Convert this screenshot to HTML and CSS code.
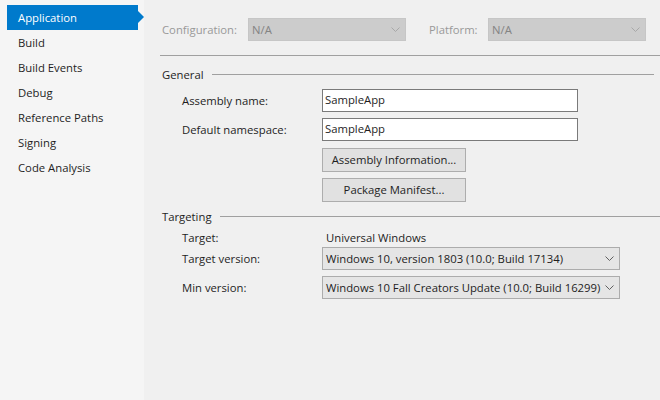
FILE: index.html
```html
<!DOCTYPE html>
<html>
<head>
<meta charset="utf-8">
<link rel="stylesheet" href="styles.css">
</head>
<body>
<div class="app">
  <nav class="sidebar">
    <div class="nav-item active">Application</div>
    <div class="nav-item">Build</div>
    <div class="nav-item">Build Events</div>
    <div class="nav-item">Debug</div>
    <div class="nav-item">Reference Paths</div>
    <div class="nav-item">Signing</div>
    <div class="nav-item">Code Analysis</div>
  </nav>
  <main class="main">
    <div class="topbar">
      <span class="top-label">Configuration:</span>
      <div class="combo disabled"><span>N/A</span><svg class="chev" width="9" height="5" viewBox="0 0 9 5"><path d="M0.5 0.5 L4.5 4.5 L8.5 0.5" fill="none" stroke="#a8a8a8" stroke-width="1"/></svg></div>
      <span class="top-label platform">Platform:</span>
      <div class="combo disabled"><span>N/A</span><svg class="chev" width="9" height="5" viewBox="0 0 9 5"><path d="M0.5 0.5 L4.5 4.5 L8.5 0.5" fill="none" stroke="#a8a8a8" stroke-width="1"/></svg></div>
    </div>
    <div class="rule"></div>

    <div class="group-title general"><span>General</span><div class="group-line"></div></div>
    <div class="row r-asm">
      <span class="label">Assembly name:</span>
      <div class="textbox">SampleApp</div>
    </div>
    <div class="row r-ns">
      <span class="label">Default namespace:</span>
      <div class="textbox">SampleApp</div>
    </div>
    <div class="row r-btn1">
      <span class="label"></span>
      <div class="button">Assembly Information...</div>
    </div>
    <div class="row r-btn2">
      <span class="label"></span>
      <div class="button">Package Manifest...</div>
    </div>

    <div class="group-title targeting"><span>Targeting</span><div class="group-line"></div></div>
    <div class="row r-target">
      <span class="label">Target:</span>
      <span class="value">Universal Windows</span>
    </div>
    <div class="row r-tv">
      <span class="label">Target version:</span>
      <div class="combo wide"><span>Windows 10, version 1803 (10.0; Build 17134)</span><svg class="chev" width="9" height="5" viewBox="0 0 9 5"><path d="M0.5 0.5 L4.5 4.5 L8.5 0.5" fill="none" stroke="#606060" stroke-width="1"/></svg></div>
    </div>
    <div class="row r-mv">
      <span class="label">Min version:</span>
      <div class="combo wide"><span>Windows 10 Fall Creators Update (10.0; Build 16299)</span><svg class="chev" width="9" height="5" viewBox="0 0 9 5"><path d="M0.5 0.5 L4.5 4.5 L8.5 0.5" fill="none" stroke="#606060" stroke-width="1"/></svg></div>
    </div>
  </main>
</div>
</body>
</html>
```

FILE: styles.css
```css
html, body {
  margin: 0;
  padding: 0;
  background: #f0f0f0;
}
body {
  font-family: "Open Sans", "Noto Sans", "Liberation Sans", sans-serif;
  font-size: 11.3px;
  color: #1e1e1e;
}
.app {
  display: flex;
  width: 660px;
  height: 400px;
  overflow: hidden;
}
.sidebar {
  width: 144px;
  flex: none;
  background: #f5f5f5;
  padding-top: 5px;
  box-sizing: border-box;
}
.nav-item {
  height: 25px;
  line-height: 25px;
  padding-left: 18px;
  box-sizing: border-box;
}
.nav-item.active {
  position: relative;
  margin-left: 7px;
  width: 131px;
  padding-left: 11px;
  background: #007acc;
  color: #ffffff;
}
.nav-item.active::after {
  content: "";
  position: absolute;
  left: 131px;
  top: 6px;
  border-top: 6px solid transparent;
  border-bottom: 6px solid transparent;
  border-left: 6px solid #007acc;
}
.main {
  flex: 1;
  padding-left: 16px;
  display: flex;
  flex-direction: column;
}
.topbar {
  display: flex;
  align-items: center;
  height: 24px;
  margin-top: 17px;
}
.top-label {
  color: #999999;
  margin-left: 2px;
  width: 86px;
}
.top-label.platform {
  margin-left: 23px;
  width: 59px;
}
.combo {
  height: 23px;
  box-sizing: border-box;
  display: flex;
  align-items: center;
  justify-content: space-between;
  padding: 0 5px 0 3px;
}
.combo.disabled {
  width: 158px;
  background: #cccccc;
  border: 1px solid #c6c6c6;
  color: #838383;
}
.combo.wide {
  width: 298px;
  background: #e5e5e5;
  border: 1px solid #acacac;
  color: #1e1e1e;
}
.chev {
  display: block;
  flex: none;
}
.rule {
  height: 1px;
  background: #a0a0a0;
  margin-top: 14px;
}
.group-title {
  display: flex;
  align-items: center;
  padding-left: 2px;
  height: 18px;
}
.group-title.general {
  margin-top: 9px;
}
.group-title.targeting {
  margin-top: 5px;
}
.group-line {
  flex: 1;
  height: 1px;
  background: #a0a0a0;
  margin-left: 8px;
}
.general .group-line {
  margin-right: 6px;
}
.row {
  display: flex;
  align-items: center;
}
.label {
  width: 140px;
  padding-left: 22px;
  flex: none;
}
.textbox {
  width: 256px;
  height: 23px;
  box-sizing: border-box;
  background: #ffffff;
  border: 1px solid #7a7a7a;
  padding: 0 2px;
  line-height: 20px;
}
.button {
  width: 144px;
  height: 24px;
  box-sizing: border-box;
  background: #e1e1e1;
  border: 1px solid #adadad;
  text-align: center;
  line-height: 22px;
}
.r-asm { margin-top: 6px; }
.r-ns { margin-top: 6px; }
.r-btn1 { margin-top: 7px; }
.r-btn2 { margin-top: 6px; }
.r-target { margin-top: 2px; height: 20px; }
.value { padding-left: 4px; }
.r-tv { margin-top: 0; }
.r-mv { margin-top: 6px; }
```
